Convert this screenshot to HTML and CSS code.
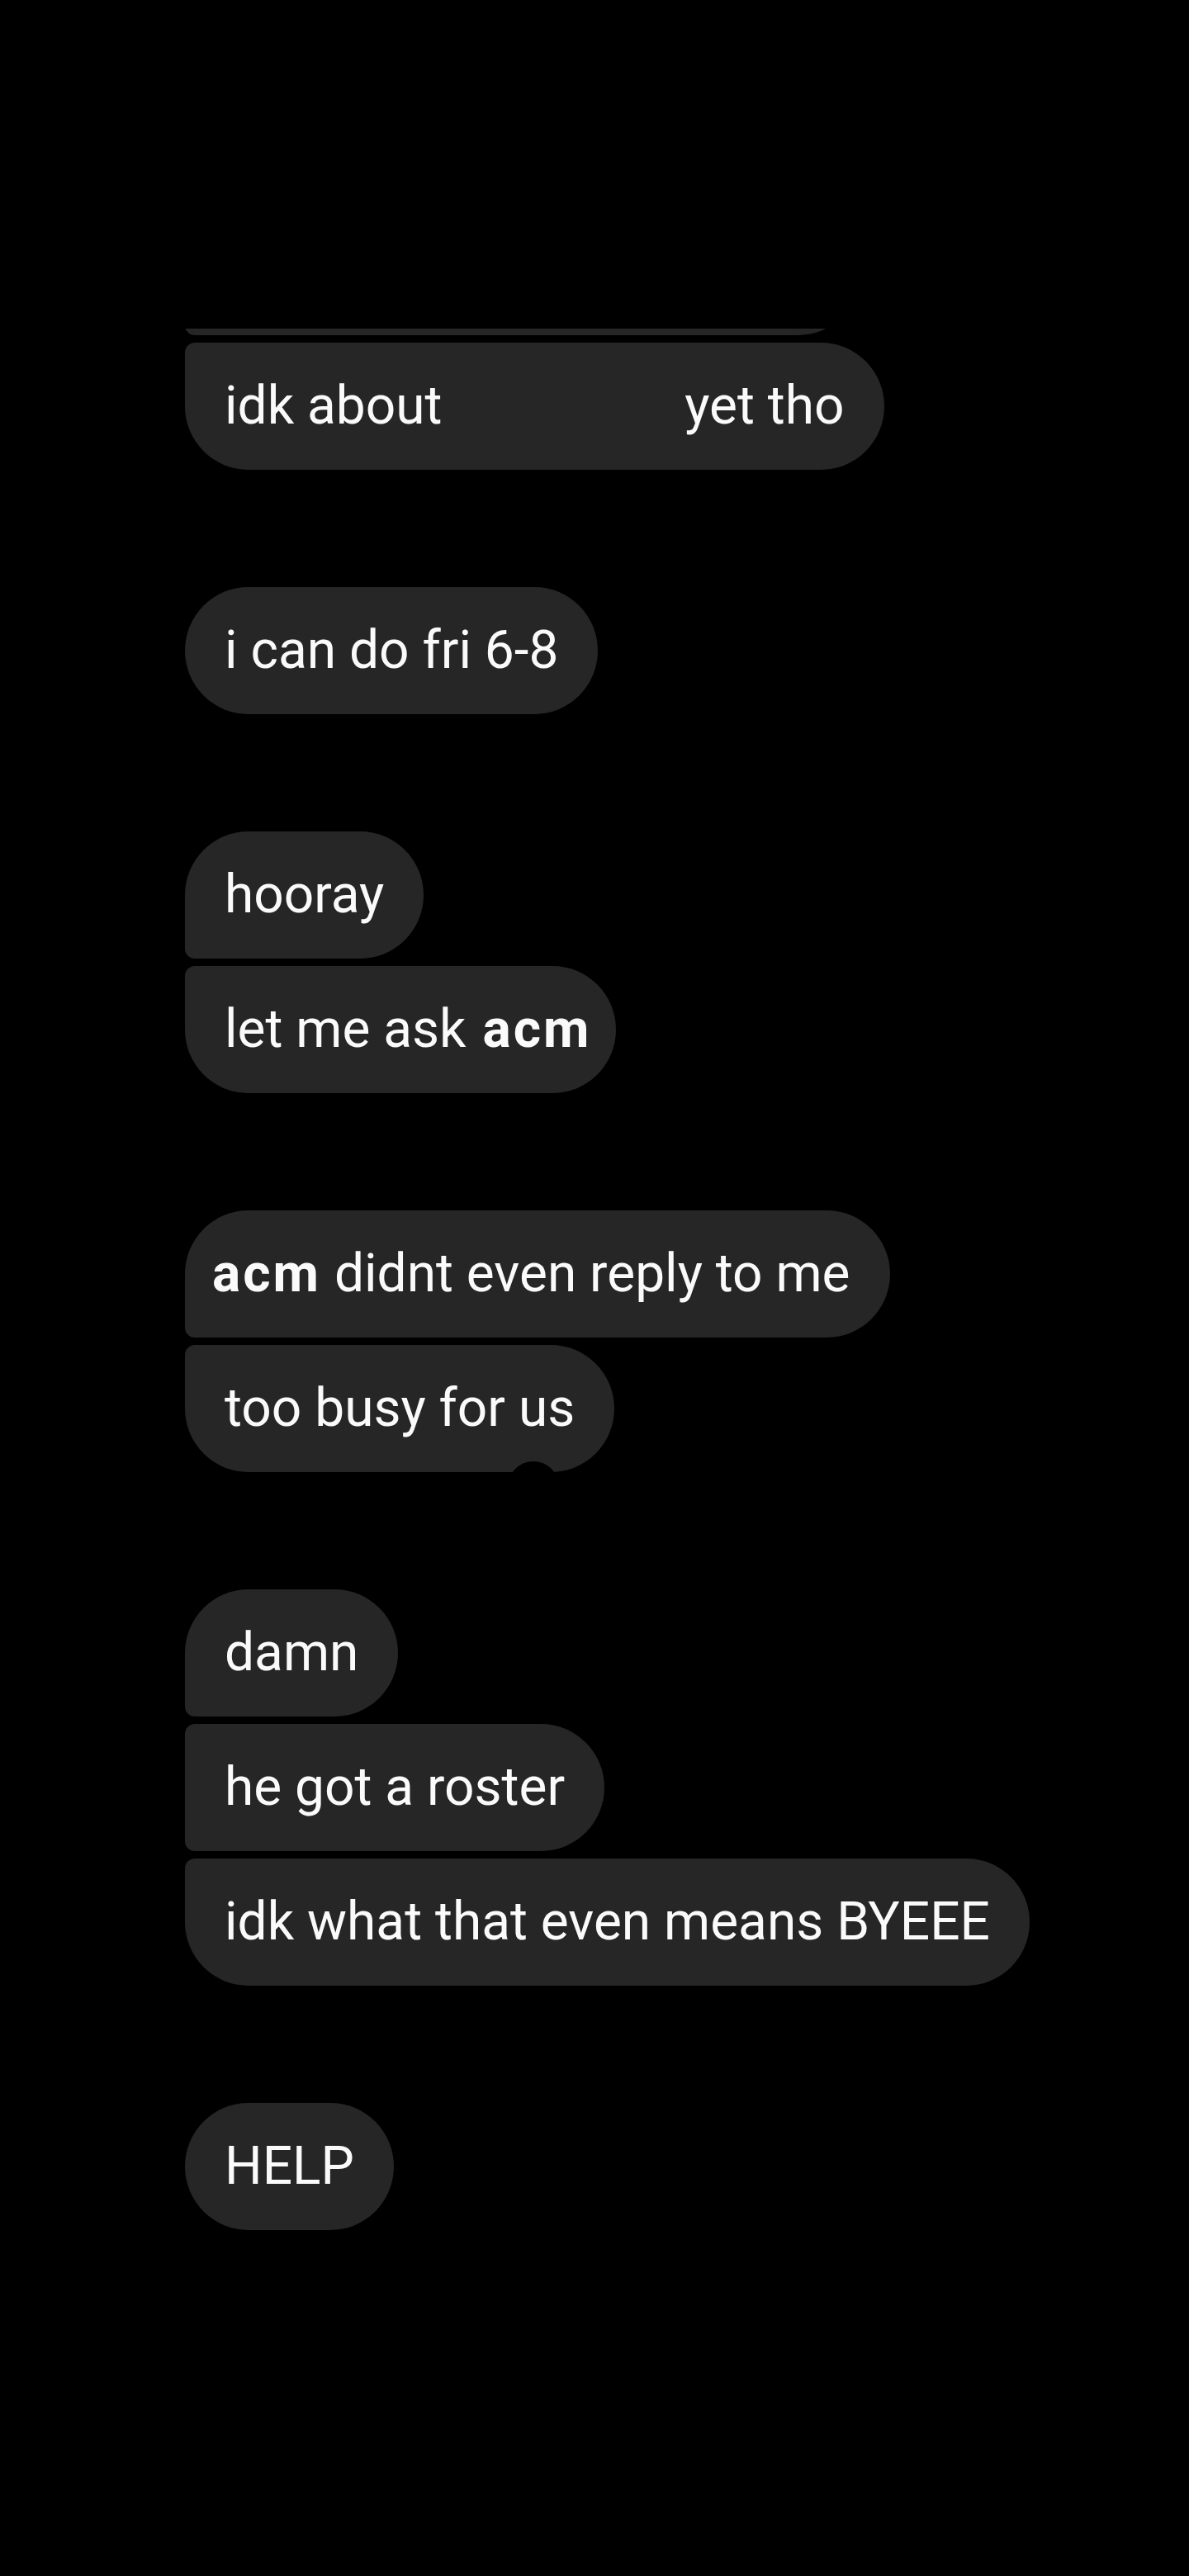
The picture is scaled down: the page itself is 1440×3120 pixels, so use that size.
FILE: index.html
```html
<!DOCTYPE html>
<html lang="en">
<head>
<meta charset="utf-8">
<title>Chat</title>
<link rel="stylesheet" href="styles.css">
</head>
<body>
<main class="thread">
  <section class="group">
    <div class="clip"><div class="bubble bubble--middle bubble--hidden"></div></div>
    <div class="bubble bubble--last">idk about <span class="gap"></span> yet tho</div>
  </section>

  <section class="group">
    <div class="bubble">i can do fri 6-8</div>
  </section>

  <section class="group">
    <div class="bubble bubble--first">hooray</div>
    <div class="bubble bubble--last bubble--tight-r">let me ask <b class="mention--after">acm</b></div>
  </section>

  <section class="group">
    <div class="bubble bubble--first bubble--tight-l"><b>acm</b> didnt even reply to me</div>
    <div class="bubble bubble--last bubble--notch">too busy for us</div>
  </section>

  <section class="group">
    <div class="bubble bubble--first">damn</div>
    <div class="bubble bubble--middle">he got a roster</div>
    <div class="bubble bubble--last">idk what that even means BYEEE</div>
  </section>

  <section class="group">
    <div class="bubble">HELP</div>
  </section>
</main>
</body>
</html>
```

FILE: styles.css
```css
html, body {
  margin: 0;
  padding: 0;
  background: #000;
}

body {
  width: 1440px;
  min-height: 3120px;
  font-family: Roboto, "Noto Sans", "Liberation Sans", sans-serif;
  color: #fafafa;
}

.thread {
  display: flex;
  flex-direction: column;
  gap: 141.5px;
  padding: 398px 0 0 224px;
}

.group {
  display: flex;
  flex-direction: column;
  align-items: flex-start;
  gap: 8.5px;
}

.bubble {
  position: relative;
  box-sizing: border-box;
  height: 154.5px;
  padding: 40px 48px;
  line-height: 74.5px;
  font-size: 64px;
  font-weight: 400;
  white-space: nowrap;
  background: #262626;
  border-radius: 77.25px;
  flex-shrink: 0;
}

.bubble b {
  font-weight: 700;
  letter-spacing: 3px;
}

.mention--after {
  margin-left: 4px;
}

.bubble--first {
  border-bottom-left-radius: 12px;
}

.bubble--middle {
  border-top-left-radius: 12px;
  border-bottom-left-radius: 12px;
}

.bubble--last {
  border-top-left-radius: 12px;
}

.bubble--tight-r {
  padding-right: 30px;
}

.bubble--tight-l {
  padding-left: 33px;
}

.clip {
  display: flex;
  align-items: flex-end;
  height: 8px;
  overflow: hidden;
}

.bubble--hidden {
  width: 819px;
}

.gap {
  display: inline-block;
  width: 262px;
}

.bubble--notch::after {
  content: "";
  position: absolute;
  left: 391px;
  top: 141.5px;
  width: 62px;
  height: 62px;
  border-radius: 50%;
  background: #000;
}
```
